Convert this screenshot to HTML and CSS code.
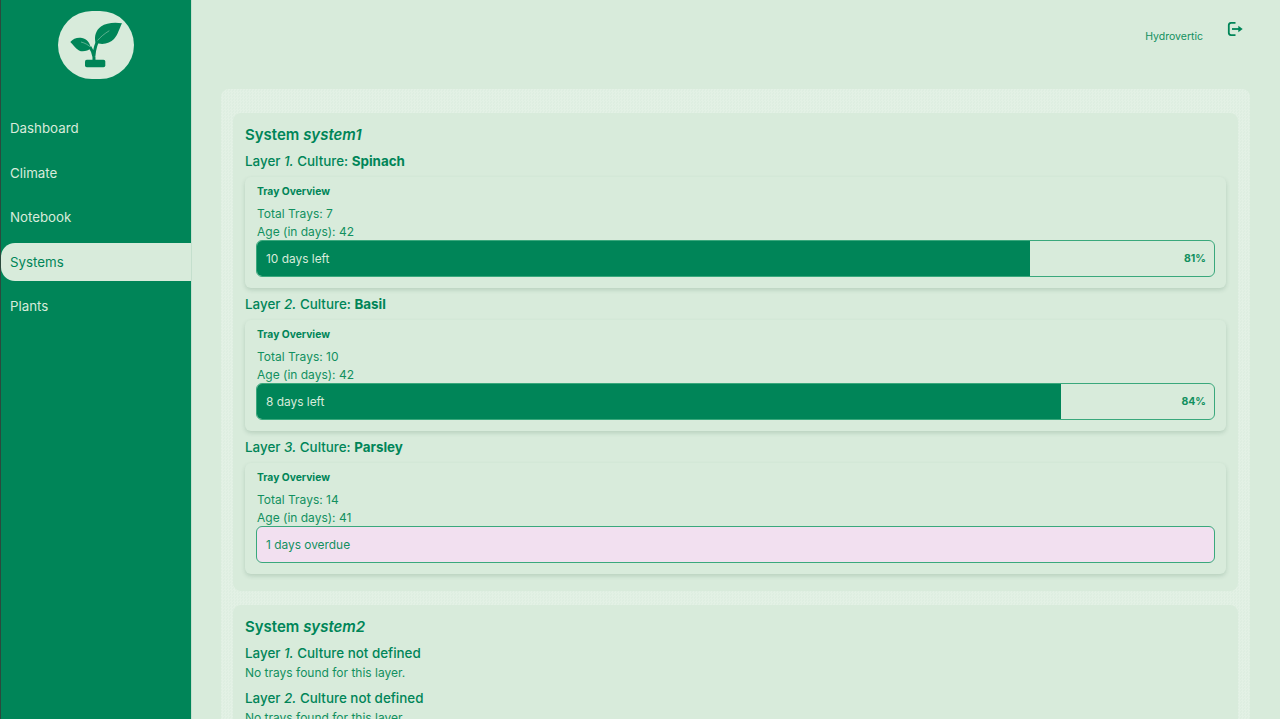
FILE: index.html
```html
<!DOCTYPE html>
<html lang="en">
<head>
<meta charset="utf-8">
<title>Systems</title>
<link rel="stylesheet" href="styles.css">
</head>
<body>
<div class="app">
  <aside class="sidebar">
    <div class="logo">
      <svg class="logo-icon" viewBox="70 21 52 48" width="52" height="48">
        <path class="fill" d="M122 23.300C114 22 106 23 101 26.500C96 30 94 36 95.500 42.500C102 45.500 110 43.500 114 39C118 35 119.500 28 122 23.300Z"/>
        <path class="fill" d="M70.300 42C73 38.500 78 37 82 38C87 39 90 43 91 48.500C88 50.500 83 52.500 79 50.500C75 48.500 73 44 70.300 42Z"/>
        <path class="vein" d="M97.500 40.500C100.500 37 104 34 109.300 30.700M81 42C85 43 88.500 45 91 47.500"/>
        <path class="stem" d="M97.500 41C95.500 46 93.500 53 94 60M90 47C92 50 93.500 53 94 57"/>
        <rect class="fill" x="85" y="59.700" width="20.300" height="7.600" rx="1.800"/>
      </svg>
    </div>
    <nav class="nav">
      <a class="nav-item">Dashboard</a>
      <a class="nav-item">Climate</a>
      <a class="nav-item">Notebook</a>
      <a class="nav-item active">Systems</a>
      <a class="nav-item">Plants</a>
    </nav>
  </aside>
  <main class="main">
    <header class="topbar">
      <span class="user">Hydrovertic</span>
      <svg class="logout" viewBox="0 0 16 16" width="16" height="16">
        <path d="M8.500 1.800H4A2.500 2.500 0 0 0 1.800 4.300V11.700A2.500 2.500 0 0 0 4 14.200H8.500"/>
        <path d="M5 8H12.500"/>
        <path class="head" d="M11.300 4.800L15.700 8L11.300 11.200Z"/>
      </svg>
    </header>
    <section class="panel">
      <article class="system">
        <h2 class="system-title">System <em>system1</em></h2>
        <h3 class="layer-title">Layer <em>1.</em> Culture: <strong>Spinach</strong></h3>
        <div class="tray">
          <h4 class="tray-title">Tray Overview</h4>
          <p class="tray-line">Total Trays: 7</p>
          <p class="tray-line">Age (in days): 42</p>
          <div class="progress">
            <div class="progress-fill" style="width:80.9%"><span>10 days left</span></div>
            <span class="progress-pct">81%</span>
          </div>
        </div>
        <h3 class="layer-title">Layer <em>2.</em> Culture: <strong>Basil</strong></h3>
        <div class="tray">
          <h4 class="tray-title">Tray Overview</h4>
          <p class="tray-line">Total Trays: 10</p>
          <p class="tray-line">Age (in days): 42</p>
          <div class="progress">
            <div class="progress-fill" style="width:84.1%"><span>8 days left</span></div>
            <span class="progress-pct">84%</span>
          </div>
        </div>
        <h3 class="layer-title">Layer <em>3.</em> Culture: <strong>Parsley</strong></h3>
        <div class="tray">
          <h4 class="tray-title">Tray Overview</h4>
          <p class="tray-line">Total Trays: 14</p>
          <p class="tray-line">Age (in days): 41</p>
          <div class="progress overdue"><span>1 days overdue</span></div>
        </div>
      </article>
      <article class="system">
        <h2 class="system-title">System <em>system2</em></h2>
        <h3 class="layer-title">Layer <em>1.</em> Culture not defined</h3>
        <p class="empty">No trays found for this layer.</p>
        <h3 class="layer-title">Layer <em>2.</em> Culture not defined</h3>
        <p class="empty">No trays found for this layer.</p>
      </article>
    </section>
  </main>
</div>
</body>
</html>
```
FILE: styles.css
```css
* { box-sizing: border-box; }
html, body { margin: 0; height: 100%; overflow: hidden; }
body {
  font-family: Inter, "Liberation Sans", sans-serif;
  background: #d8ebdb;
  color: #008558;
}
.app { display: flex; height: 719px; overflow: hidden; }
.sidebar {
  flex: 0 0 192px;
  background: #008558;
  border-left: 1px solid #2b4a3d;
  border-right: 1px solid #c4dfcd;
  display: flex;
  flex-direction: column;
}
.logo {
  align-self: center;
  width: 76px;
  height: 68px;
  margin-top: 11px;
  margin-bottom: 30px;
  background: #d8ebdb;
  border-radius: 34px;
  display: flex;
  align-items: center;
  justify-content: center;
}
.logo-icon .fill { fill: #008558; }
.logo-icon .stem { fill: none; stroke: #008558; stroke-width: 3; }
.logo-icon .vein { fill: none; stroke: #d8ebdb; stroke-width: 0.700; opacity: 0.6; }
.nav { display: flex; flex-direction: column; gap: 6.600px; }
.nav-item {
  height: 38px;
  display: flex;
  align-items: center;
  padding-left: 9px;
  font-size: 13.300px;
  color: #d8ebdb;
  border-radius: 14px 0 0 14px;
}
.nav-item.active { background: #d8ebdb; color: #008558; }
.main { flex: 1; min-width: 0; padding: 0 30px 0 29px; }
.topbar {
  height: 89px;
  display: flex;
  justify-content: flex-end;
  padding-right: 7px;
  gap: 24px;
}
.user { font-size: 10.500px; margin-top: 30px; line-height: 13px; color: #12905f; }
.logout { margin-top: 21px; fill: none; stroke: #008558; stroke-width: 1.800; }
.logout .head { fill: #008558; stroke: none; }
.panel {
  background: repeating-conic-gradient(#e3f1e5 0 25%, #deeee1 0 50%) 0 0 / 3px 3px;
  border-radius: 8px 8px 0 0;
  padding: 24px 12px 0;
  display: flex;
  flex-direction: column;
  gap: 13.500px;
}
.system {
  background: #d8ebdb;
  border-radius: 8px;
  padding: 12px 12px 11px;
}
.system-title { margin: 0; font-size: 15px; font-weight: 600; line-height: 20px; }
.system-title em { font-style: italic; }
.layer-title { margin: 6px 0 0; font-size: 13.400px; font-weight: 500; line-height: 20px; }
.layer-title em { font-style: italic; font-weight: 500; }
.layer-title strong { font-weight: 700; }
.tray {
  margin: 6px 0;
  height: 111px;
  background: #d8ebdb;
  border-radius: 6px;
  box-shadow: 0 2px 4px rgba(40, 90, 60, 0.18);
  padding: 8px 11px 0 12px;
}
.tray-title { margin: 0 0 7px; font-size: 10.300px; font-weight: 700; line-height: 13px; }
.tray-line { margin: 0; font-size: 12px; line-height: 18px; color: #12905f; }
.progress {
  position: relative;
  height: 37px;
  width: 959px;
  margin: -1px 0 0 -1px;
  border: 1px solid #3aa87c;
  border-radius: 6px;
  overflow: hidden;
  font-size: 11.900px;
  display: flex;
  align-items: center;
  color: #12905f;
}
.progress-fill {
  position: absolute;
  left: -1px;
  top: -1px;
  bottom: -1px;
  background: #008558;
  color: #d8ebdb;
  display: flex;
  align-items: center;
  padding-left: 10px;
}
.progress-pct {
  margin-left: auto;
  padding-right: 8px;
  font-size: 10.500px;
  font-weight: 700;
}
.overdue { background: #f2e0f0; padding-left: 9px; }
.empty { margin: 0; font-size: 12px; line-height: 19px; color: #12905f; }
```
